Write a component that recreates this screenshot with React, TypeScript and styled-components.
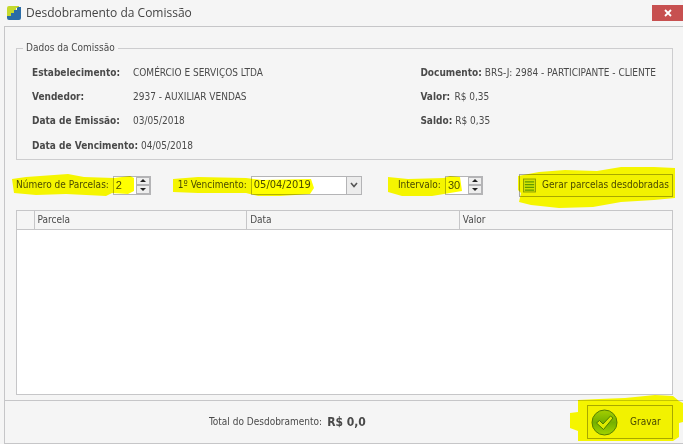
import React, { useState } from "react";
import styled, { createGlobalStyle } from "styled-components";

const GlobalStyle = createGlobalStyle`
  * { box-sizing: border-box; }
  body { margin: 0; background: #f5f5f5; }
  body, button, input {
    font-family: Tahoma, "DejaVu Sans Condensed", "Noto Sans", sans-serif;
    font-size: 10px;
    line-height: 14px;
    color: #4a4a4a;
  }
`;

const Window = styled.div`
  display: flex;
  flex-direction: column;
  min-height: 100vh;
  background: #f5f5f5;
`;

const TitleBar = styled.header`
  display: flex;
  align-items: center;
  height: 26px;
  padding-left: 7px;
  gap: 4px;
`;

const Title = styled.h1`
  flex: 1;
  margin: 0;
  font-family: "Open Sans", sans-serif;
  font-size: 12px;
  line-height: 18px;
  font-weight: 400;
  color: #444;
`;

const CloseButton = styled.button`
  display: flex;
  align-items: center;
  justify-content: center;
  align-self: flex-start;
  width: 31px;
  height: 16px;
  margin-top: 5px;
  padding: 0;
  border: 0;
  background: #c75050;
`;

const Frame = styled.main`
  flex: 1;
  display: flex;
  flex-direction: column;
  margin-left: 4px;
  border: 1px solid #c6c6c8;
  border-right: 0;
`;

const Content = styled.div`
  flex: 1;
  display: flex;
  flex-direction: column;
  padding: 14px 10px 5px 11px;
`;

const DataGroup = styled.fieldset`
  display: grid;
  grid-template-columns: 389fr 252fr;
  min-width: 0;
  margin: 0;
  padding: 11px 0 6px 15px;
  border: 1px solid #cdcdcf;
`;

const Legend = styled.legend`
  margin-left: -9px;
  padding: 0 3px;
`;

const FieldList = styled.dl`
  display: flex;
  flex-direction: column;
  gap: 10px;
  margin: 0;
`;

const Field = styled.div<{ $label: number }>`
  display: flex;
  gap: 3px;
  white-space: nowrap;
  dt { min-width: ${(p) => p.$label}px; font-weight: 700; }
  dd { margin: 0; }
  &:nth-child(4) { padding-top: 1px; }
`;

const Controls = styled.div`
  display: flex;
  align-items: center;
  justify-content: space-between;
  height: 24px;
  margin: 13px 0 13px;
`;

const ControlPair = styled.div`
  display: flex;
  align-items: center;
  gap: 27px;
`;

const ControlGroup = styled.div`
  position: relative;
  display: flex;
  align-items: center;
  gap: 4px;
`;

const Box = styled.div<{ $width: number }>`
  display: flex;
  width: ${(p) => p.$width}px;
  height: 19px;
  border: 1px solid #b4b4b6;
  background: #fff;
`;

const TextInput = styled.input<{ $numeric?: boolean }>`
  flex: 1;
  min-width: 0;
  padding: 0 2px;
  border: 0;
  outline: 0;
  background: transparent;
  font-size: 11px;
  ${(p) => p.$numeric && 'font-family: "Liberation Sans", sans-serif;'}
`;

const Arrows = styled.div`
  display: flex;
  flex-direction: column;
  width: 14px;
`;

const ArrowButton = styled.button`
  flex: 1;
  display: flex;
  align-items: center;
  justify-content: center;
  min-height: 0;
  padding: 0;
  border: 1px solid #b4b4b6;
  background: #eee;
`;

const DropButton = styled.button`
  display: flex;
  align-items: center;
  justify-content: center;
  width: 15px;
  padding: 0;
  border: 0;
  border-left: 1px solid #b4b4b6;
  background: #ececec;
`;

const ActionButton = styled.button<{ $big?: boolean }>`
  display: flex;
  align-items: center;
  gap: ${(p) => (p.$big ? 12 : 6)}px;
  width: ${(p) => (p.$big ? 86 : 154)}px;
  height: ${(p) => (p.$big ? 34 : 23)}px;
  padding: 0 3px;
  border: 1px solid #a8a8a8;
  background: #f2f2f2;
  white-space: nowrap;
`;

const Marker = styled.svg`
  position: absolute;
  top: -10px;
  left: -10px;
  overflow: visible;
  mix-blend-mode: multiply;
  pointer-events: none;
  fill: #ffff00;
`;

const Grid = styled.div`
  flex: 1;
  border: 1px solid #c6c6c8;
  background: #fff;
`;

const Table = styled.table`
  width: 100%;
  table-layout: fixed;
  border-collapse: collapse;
  th {
    height: 18px;
    padding: 0 3px;
    border-bottom: 1px solid #c6c6c8;
    background: #f5f5f5;
    font-weight: 400;
    text-align: left;
  }
  th + th { border-left: 1px solid #c6c6c8; }
  th:first-child { width: 17px; }
`;

const Footer = styled.footer`
  display: flex;
  align-items: center;
  justify-content: space-between;
  height: 43px;
  padding: 0 10px 0 204px;
  border-top: 1px solid #c6c6c8;
`;

const Total = styled.div`
  display: flex;
  align-items: center;
  gap: 5px;
  strong { font-size: 12px; }
`;

const AppLogo = () => (
  <svg width="15" height="14" viewBox="0 0 15 14" aria-hidden="true">
    <path d="M0 2Q0 0 2 0H12V2H9V4H7V7H4V10H0Z" fill="#c5d92d" />
    <path d="M14 1V12Q14 14 12 14H2Q0 14 0 12V10H4V7H7V4H10V2L11 1Z" fill="#2a6ca6" />
  </svg>
);

const Triangle = ({ down }: { down?: boolean }) => (
  <svg width="6" height="3" viewBox="0 0 6 3" aria-hidden="true">
    <path d={down ? "M0 0H6L3 3Z" : "M0 3H6L3 0Z"} fill="#222" />
  </svg>
);

const ListIcon = () => (
  <svg width="14" height="15" viewBox="0 0 14 15" aria-hidden="true">
    <rect x=".5" y=".5" width="13" height="14" fill="#d3e3a8" stroke="#8c9c5c" />
    <path d="M2 3.5H12M2 6.5H12M2 9.5H12M2 12.5H12" stroke="#5f9a2c" strokeWidth="1.4" />
  </svg>
);

const CheckIcon = () => (
  <svg width="27" height="27" viewBox="0 0 27 27" aria-hidden="true">
    <defs>
      <linearGradient id="check-green" x2="0" y2="1">
        <stop offset="0" stopColor="#a5cf3c" />
        <stop offset=".5" stopColor="#74b01c" />
        <stop offset="1" stopColor="#a2d42c" />
      </linearGradient>
    </defs>
    <circle cx="13.5" cy="13.5" r="12.5" fill="url(#check-green)" stroke="#557f20" />
    <path d="M5.5 14L8.5 11.5L12 15L19.5 7L22 9L12.5 20.5Z" fill="#dceaa0" stroke="#4d7d17" strokeLinejoin="round" />
  </svg>
);

type SpinnerProps = { id: string; label: string; initial: number; marker: string };

function Spinner({ id, label, initial, marker }: SpinnerProps) {
  const [value, setValue] = useState(initial);
  return (
    <ControlGroup>
      <label htmlFor={id}>{label}</label>
      <Box $width={38}>
        <TextInput $numeric id={id} value={value} onChange={(e) => setValue(Number(e.target.value) || 0)} />
        <Arrows>
          <ArrowButton aria-label="Aumentar" onClick={() => setValue(value + 1)}><Triangle /></ArrowButton>
          <ArrowButton aria-label="Diminuir" onClick={() => setValue(value - 1)}><Triangle down /></ArrowButton>
        </Arrows>
      </Box>
      <Marker width="160" height="40" viewBox="0 0 160 40"><path d={marker} /></Marker>
    </ControlGroup>
  );
}

const origin = [
  ["Estabelecimento:", "COMÉRCIO E SERVIÇOS LTDA"],
  ["Vendedor:", "2937 - AUXILIAR VENDAS"],
  ["Data de Emissão:", "03/05/2018"],
  ["Data de Vencimento:", "04/05/2018"],
];

const amounts = [
  ["Documento:", "BRS-J: 2984 - PARTICIPANTE - CLIENTE"],
  ["Valor:", "R$ 0,35"],
  ["Saldo:", "R$ 0,35"],
];

export default function App() {
  return (
    <>
      <GlobalStyle />
      <Window>
        <TitleBar>
          <AppLogo />
          <Title>Desdobramento da Comissão</Title>
          <CloseButton aria-label="Fechar">
            <svg width="8" height="8" viewBox="0 0 8 8" aria-hidden="true">
              <path d="M1 1L7 7M7 1L1 7" stroke="#fff" strokeWidth="1.8" />
            </svg>
          </CloseButton>
        </TitleBar>
        <Frame>
          <Content>
            <DataGroup>
              <Legend>Dados da Comissão</Legend>
              <FieldList>
                {origin.map(([label, value]) => (
                  <Field key={label} $label={98}><dt>{label}</dt><dd>{value}</dd></Field>
                ))}
              </FieldList>
              <FieldList>
                {amounts.map(([label, value]) => (
                  <Field key={label} $label={31}><dt>{label}</dt><dd>{value}</dd></Field>
                ))}
              </FieldList>
            </DataGroup>
            <Controls>
              <ControlPair>
                <Spinner
                  id="parcelas"
                  label="Número de Parcelas:"
                  initial={2}
                  marker="M6 13L20 11L48 9L62 8L78 11L108 12L124 10L128 12V25L122 28L106 27L100 30L60 28L30 29L8 27Z"
                />
                <ControlGroup>
                  <label htmlFor="vencimento">1º Vencimento:</label>
                  <Box $width={111}>
                    <TextInput id="vencimento" defaultValue="05/04/2019" />
                    <DropButton aria-label="Abrir calendário">
                      <svg width="8" height="6" viewBox="0 0 8 6" aria-hidden="true">
                        <path d="M1 1L4 4.5L7 1" fill="none" stroke="#555" strokeWidth="1.6" />
                      </svg>
                    </DropButton>
                  </Box>
                  <Marker width="160" height="40" viewBox="0 0 160 40">
                    <path d="M5 13L30 11L78 12L94 14L143 13L146 22L142 28L112 30L90 30L78 27L30 27L5 26Z" />
                  </Marker>
                </ControlGroup>
              </ControlPair>
              <Spinner
                id="intervalo"
                label="Intervalo:"
                initial={30}
                marker="M0 11L20 13L56 12L62 10L72 11L74 25L56 28L44 30L14 30L0 26Z"
              />
              <ControlGroup>
                <ActionButton><ListIcon />Gerar parcelas desdobradas</ActionButton>
                <Marker width="176" height="56" viewBox="0 0 176 56">
                  <path d="M9 12L30 8L56 6L88 7L112 3L145 3L166 4L166 34L145 36L112 38L84 43L50 44L22 41L10 38L12 29L9 26Z" />
                </Marker>
              </ControlGroup>
            </Controls>
            <Grid>
              <Table>
                <thead>
                  <tr><th aria-label="Seleção" /><th>Parcela</th><th>Data</th><th>Valor</th></tr>
                </thead>
                <tbody />
              </Table>
            </Grid>
          </Content>
          <Footer>
            <Total>Total do Desdobramento: <strong>R$ 0,0</strong></Total>
            <ControlGroup>
              <ActionButton $big><CheckIcon />Gravar</ActionButton>
              <Marker width="106" height="50" viewBox="0 0 106 50">
                <path d="M1 5L22 4L48 3L78 0L96 1L102 6L106 8V27L102 28V42L96 46H1V36L-7 33V18L1 17Z" />
              </Marker>
            </ControlGroup>
          </Footer>
        </Frame>
      </Window>
    </>
  );
}
